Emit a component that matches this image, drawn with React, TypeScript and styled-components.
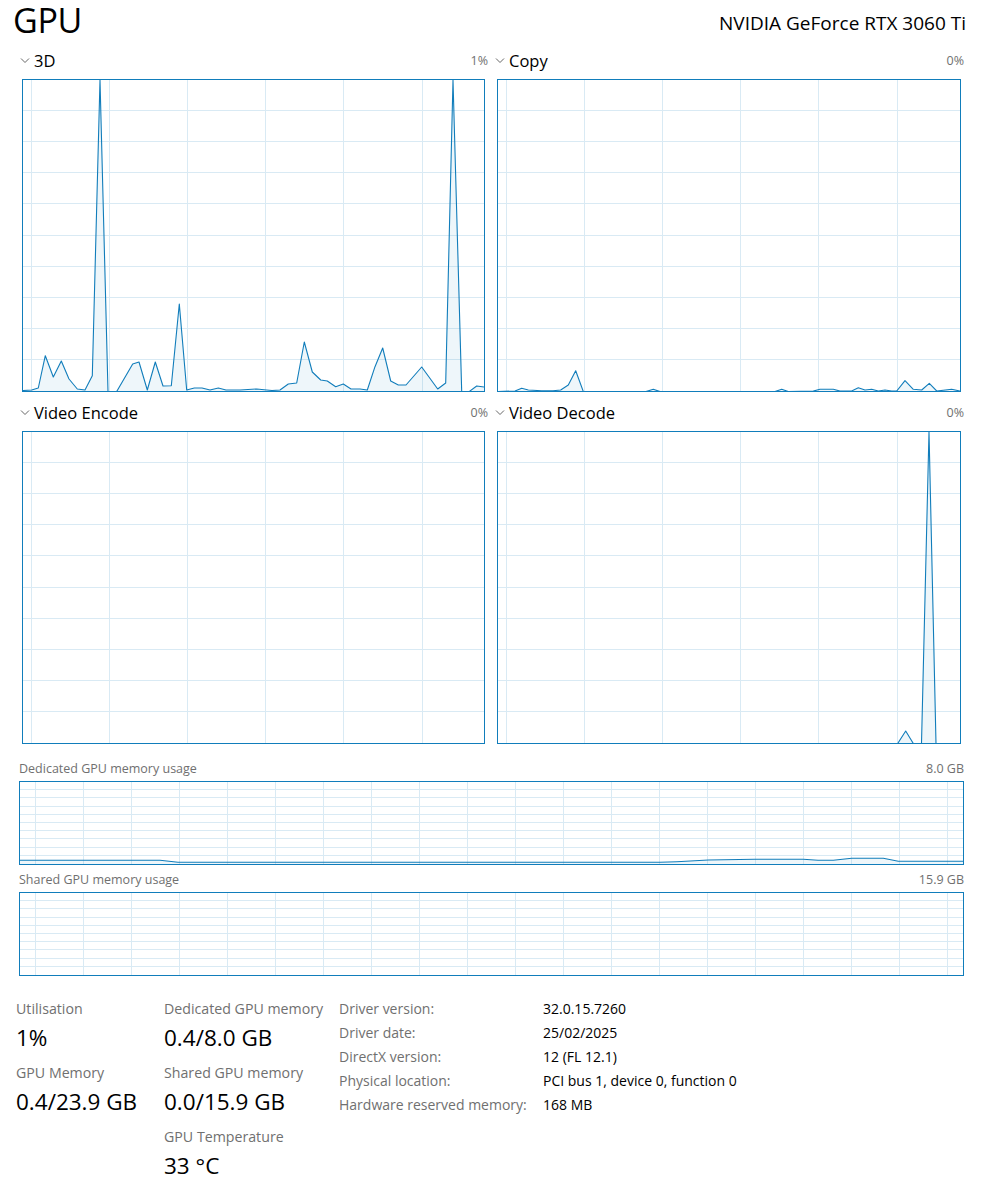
import React from 'react';
import styled, { createGlobalStyle } from 'styled-components';

const GlobalStyle = createGlobalStyle`
  *, *::before, *::after { box-sizing: border-box; }
  html, body { margin: 0; padding: 0; background: #ffffff; }
  body { font-family: "Open Sans", "Noto Sans", sans-serif; color: #000; }
`;

const ACCENT = '#117dbb';
const GRID = '#d9eaf4';

const Page = styled.div`
  width: 986px;
  height: 1195px;
  overflow: hidden;
  background: #fff;
`;

const TitleBar = styled.header`
  display: flex;
  justify-content: space-between;
  align-items: flex-start;
  height: 40px;
  padding: 0 20px 0 13px;
`;

const Title = styled.h1`
  margin: 0;
  font-size: 34px;
  font-weight: 400;
  line-height: 40px;
  letter-spacing: -0.3px;
`;

const Device = styled.div`
  margin-top: 11px;
  font-size: 19px;
  line-height: 24px;
`;

const EngineGrid = styled.div`
  display: grid;
  grid-template-columns: 463px 464px;
  column-gap: 12px;
  margin-left: 22px;
`;

const Panel = styled.section`
  display: flex;
  flex-direction: column;
`;

const PanelHeader = styled.div`
  display: flex;
  align-items: center;
  justify-content: space-between;
  height: 39px;
  padding-top: 2px;
  margin: 0 -3px 0 -2px;
`;

const PanelTitle = styled.div`
  display: flex;
  align-items: center;
  gap: 4px;
  font-size: 16.5px;
  line-height: 20px;
`;

const Percent = styled.div`
  font-size: 12.5px;
  line-height: 20px;
  color: #707070;
`;

const Frame = styled.div<{ $h: number }>`
  border: 1px solid ${ACCENT};
  height: ${(p) => p.$h}px;
  background: #fff;
  svg { display: block; }
`;

const MemorySection = styled.section<{ $top: number }>`
  margin: 0 22px 0 19px;
  padding-top: ${(p) => p.$top}px;
`;

const MemoryHeader = styled.div`
  display: flex;
  justify-content: space-between;
  font-size: 12.5px;
  line-height: 16px;
  color: #707070;
  margin-bottom: 4px;
`;

const Stats = styled.section`
  display: flex;
  margin-top: 20px;
  padding-left: 16px;
`;

const StatColumn = styled.div<{ $w: number }>`
  width: ${(p) => p.$w}px;
  display: flex;
  flex-direction: column;
  gap: 8px;
  padding-top: 3px;
`;

const Stat = styled.div`
  display: flex;
  flex-direction: column;
`;

const StatLabel = styled.div`
  font-size: 14.2px;
  line-height: 20px;
  color: #707070;
  white-space: nowrap;
`;

const StatValue = styled.div`
  font-size: 22.5px;
  line-height: 34px;
  padding-top: 2px;
  color: #000;
  white-space: nowrap;
`;

const InfoTable = styled.dl`
  display: grid;
  grid-template-columns: 204px auto;
  grid-auto-rows: 24px;
  align-items: center;
  margin: 0;
  font-size: 14px;
  white-space: nowrap;
`;

const InfoKey = styled.dt`
  color: #707070;
  margin: 0;
`;

const InfoVal = styled.dd`
  color: #000;
  margin: 0;
`;

type Pt = [number, number];

const Chevron = () => (
  <svg width="10" height="6" viewBox="0 0 10 6">
    <polyline points="1,0.5 5,4.5 9,0.5" fill="none" stroke="#666" strokeWidth="1" />
  </svg>
);

interface GraphProps {
  w: number;
  h: number;
  vStart: number;
  vStep: number;
  rows: number;
  pts?: Pt[];
  origin?: Pt;
}

const Graph: React.FC<GraphProps> = ({ w, h, vStart, vStep, rows, pts, origin = [0, 0] }) => {
  const vlines: number[] = [];
  for (let x = vStart; x < w; x += vStep) vlines.push(Math.round(x) + 0.5);
  const hlines: number[] = [];
  for (let i = 1; i < rows; i++) hlines.push(Math.round((h * i) / rows) - 0.5);
  const rel = (pts || []).map(([x, y]) => [x - origin[0], Math.min(y - origin[1], h + 0.5)] as Pt);
  const line = rel.map((p) => p.join(',')).join(' ');
  const poly = rel.length
    ? `${rel[0][0]},${h + 1} ${line} ${rel[rel.length - 1][0]},${h + 1}`
    : '';
  return (
    <svg width={w} height={h} viewBox={`0 0 ${w} ${h}`}>
      {vlines.map((x) => (
        <line key={'v' + x} x1={x} x2={x} y1={0} y2={h} stroke={GRID} strokeWidth={1} />
      ))}
      {hlines.map((y) => (
        <line key={'h' + y} x1={0} x2={w} y1={y} y2={y} stroke={GRID} strokeWidth={1} />
      ))}
      {rel.length > 0 && (
        <>
          <polygon points={poly} fill="rgba(17,125,187,0.07)" />
          <polyline points={line} fill="none" stroke={ACCENT} strokeWidth={1.1} strokeLinejoin="round" />
        </>
      )}
    </svg>
  );
};

const data3D: Pt[] = [
  [23, 390.5], [31.7, 390], [38.3, 388], [45.3, 355.7], [53.3, 377], [61.3, 361], [69, 379],
  [77.3, 389], [85, 390], [92.3, 375.7], [100, 80], [108, 391.5], [116.7, 391.5], [132.7, 364],
  [139, 362], [147.3, 390], [155.3, 362], [163, 386], [171.3, 385.7], [179.3, 304], [186.7, 390],
  [194.3, 388], [202, 388], [210, 390], [218.3, 388], [226, 390], [233, 390], [240, 390],
  [248, 389.5], [256.7, 389], [266.7, 390], [272, 390.5], [280, 390], [288.3, 384], [296.7, 383],
  [304.3, 342], [312.3, 372], [320.7, 380], [327.3, 381], [335.7, 386.7], [343.3, 384],
  [351, 389], [360, 389], [367.3, 390], [375, 366.7], [382.7, 348], [390.7, 381], [398.3, 385],
  [406, 385], [421.7, 367], [437.7, 389], [445.7, 383], [453, 80], [461.7, 391.5], [469.3, 391.5],
  [476.7, 386], [484, 387],
];

const dataCopy: Pt[] = [
  [498, 391.5], [515, 391], [521.7, 388.3], [528.3, 390], [541.7, 390.7], [553, 390.7],
  [560.7, 390], [568.3, 385], [575.7, 370.7], [583.3, 391.5], [646, 391.5], [653.3, 389.3],
  [660, 391.5], [775, 391.5], [781.7, 389.3], [788.3, 391.5], [813.3, 391], [820, 389.3],
  [833.3, 389.3], [840, 391], [851.7, 391], [858.3, 387.7], [865, 390], [871.7, 389.3],
  [878.3, 391], [885, 390], [891.7, 391], [896.7, 391], [905, 380.7], [913.3, 389.3],
  [921.7, 390], [929.3, 383.3], [936.7, 391], [951.7, 389.3], [960, 391],
];

const dataDecode: Pt[] = [
  [498, 745], [897.7, 745], [905.7, 731], [913.3, 745], [921.5, 745], [929, 431.5], [936, 745],
  [961, 745],
];

const dataDedicated: Pt[] = [
  [20, 860.3], [160, 860.3], [178, 862.3], [660, 862.3], [676.7, 861.7], [708.3, 860],
  [755, 859.3], [803.3, 859.3], [818, 860.3], [833.3, 860.3], [851.7, 858.3], [883.3, 858.3],
  [898.3, 861.3], [963, 861.3],
];

const engines = [
  { name: '3D', pct: '1%', pts: data3D, origin: [23, 80] as Pt },
  { name: 'Copy', pct: '0%', pts: dataCopy, origin: [498, 80] as Pt },
  { name: 'Video Encode', pct: '0%', pts: undefined, origin: [23, 432] as Pt },
  { name: 'Video Decode', pct: '0%', pts: dataDecode, origin: [498, 432] as Pt },
];

const info: [string, string][] = [
  ['Driver version:', '32.0.15.7260'],
  ['Driver date:', '25/02/2025'],
  ['DirectX version:', '12 (FL 12.1)'],
  ['Physical location:', 'PCI bus 1, device 0, function 0'],
  ['Hardware reserved memory:', '168 MB'],
];

export default function App() {
  return (
    <Page>
      <GlobalStyle />
      <TitleBar>
        <Title>GPU</Title>
        <Device>NVIDIA GeForce RTX 3060 Ti</Device>
      </TitleBar>

      <EngineGrid>
        {engines.map((e, i) => {
          const w = i % 2 === 0 ? 461 : 462;
          return (
            <Panel key={e.name}>
              <PanelHeader>
                <PanelTitle>
                  <Chevron />
                  {e.name}
                </PanelTitle>
                <Percent>{e.pct}</Percent>
              </PanelHeader>
              <Frame $h={313}>
                <Graph w={w} h={311} vStart={7.5} vStep={78.2} rows={10} pts={e.pts} origin={e.origin} />
              </Frame>
            </Panel>
          );
        })}
      </EngineGrid>

      <MemorySection $top={17}>
        <MemoryHeader>
          <span>Dedicated GPU memory usage</span>
          <span>8.0 GB</span>
        </MemoryHeader>
        <Frame $h={84}>
          <Graph w={943} h={82} vStart={15} vStep={48} rows={10} pts={dataDedicated} origin={[20, 782]} />
        </Frame>
      </MemorySection>

      <MemorySection $top={7}>
        <MemoryHeader>
          <span>Shared GPU memory usage</span>
          <span>15.9 GB</span>
        </MemoryHeader>
        <Frame $h={84}>
          <Graph w={943} h={82} vStart={15} vStep={48} rows={10} />
        </Frame>
      </MemorySection>

      <Stats>
        <StatColumn $w={148}>
          <Stat>
            <StatLabel>Utilisation</StatLabel>
            <StatValue>1%</StatValue>
          </Stat>
          <Stat>
            <StatLabel>GPU Memory</StatLabel>
            <StatValue>0.4/23.9 GB</StatValue>
          </Stat>
        </StatColumn>
        <StatColumn $w={175}>
          <Stat>
            <StatLabel>Dedicated GPU memory</StatLabel>
            <StatValue>0.4/8.0 GB</StatValue>
          </Stat>
          <Stat>
            <StatLabel>Shared GPU memory</StatLabel>
            <StatValue>0.0/15.9 GB</StatValue>
          </Stat>
          <Stat>
            <StatLabel>GPU Temperature</StatLabel>
            <StatValue>33 °C</StatValue>
          </Stat>
        </StatColumn>
        <InfoTable>
          {info.map(([k, v]) => (
            <React.Fragment key={k}>
              <InfoKey>{k}</InfoKey>
              <InfoVal>{v}</InfoVal>
            </React.Fragment>
          ))}
        </InfoTable>
      </Stats>
    </Page>
  );
}
